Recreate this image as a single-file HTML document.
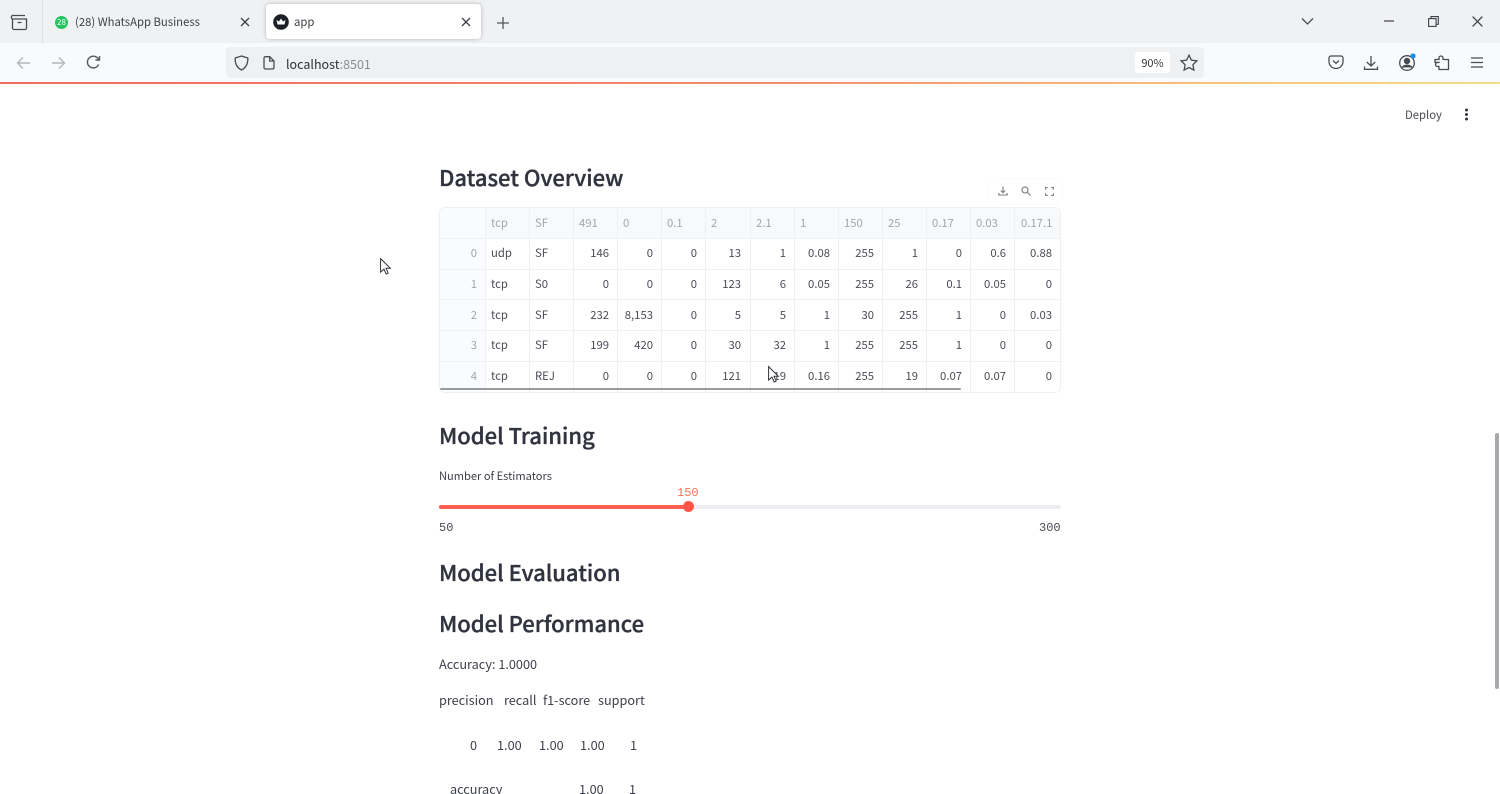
<!DOCTYPE html>
<html><head><meta charset="utf-8"><title>app</title>
<style>
html,body{margin:0;padding:0;width:1500px;height:794px;overflow:hidden;background:#fff}
#p{position:absolute;left:0;top:0;width:1500px;height:794px;overflow:hidden;background:#fff;filter:blur(.3px);font-family:"Noto Sans CJK JP","Liberation Sans",sans-serif;color:#31333f}
.a{position:absolute;white-space:nowrap}
svg{position:absolute;overflow:visible}
.h{font-size:22px;font-weight:500;-webkit-text-stroke:.35px #31333f;line-height:30px;color:#31333f;left:439px}
.t{font-size:12.700px;line-height:18px;color:#3d3f4a}
.g{position:absolute;width:44px;height:30px;line-height:30px;font-size:11.300px;color:#4a4c56;text-align:right;box-sizing:border-box;padding-right:8px}
.l{text-align:left;padding:0 0 0 6px}
.hd{color:#a3a6ad;text-align:left;padding:0 0 0 6px}
.i{color:#a3a6ad}
.v{position:absolute;top:208px;height:184px;width:1px;background:#eff0f3}
.r{position:absolute;left:440px;width:620px;height:1px;background:#eff0f3}
.m{font-family:"Liberation Mono",monospace;font-size:12px;line-height:14px}
</style></head><body><div id="p">

<!-- tab strip -->
<div class="a" style="left:0;top:0;width:1500px;height:43px;background:#f0f1f3"></div>
<div class="a" style="left:42px;top:0;width:1px;height:43px;background:#dfe0e3"></div>
<svg style="left:11px;top:14px" width="17" height="17" fill="none" stroke="#4a4b52" stroke-width="1.300"><path d="M3 1.500h11M1.500 5h14v9a1.500 1.500 0 0 1-1.500 1.500H3A1.500 1.500 0 0 1 1.500 14zM1.500 5a1.700 1.700 0 0 1 1.500-3.500M6.500 8.500h4"/></svg>
<div class="a" style="left:55px;top:16px;width:13px;height:13px;border-radius:50%;background:#25c45e;color:#fff;font-size:8px;line-height:13px;text-align:center">28</div>
<div class="a" style="left:75px;top:13px;font-size:11.300px;line-height:18px;color:#3f4048">(28) WhatsApp Business</div>
<svg style="left:240px;top:17px" width="10" height="10" stroke="#3f4048" stroke-width="1.300"><path d="M1 1l8 8M9 1l-8 8"/></svg>
<div class="a" style="left:266px;top:4px;width:215px;height:35px;background:#fff;border-radius:4px;box-shadow:0 0 4px rgba(0,0,0,.25)"></div>
<svg style="left:273px;top:14px" width="16" height="16"><circle cx="8" cy="8" r="7.800" fill="#1d1f26"/><path d="M3.500 6l2.500 1.500L8 4.500l2 3L12.500 6l-1 4.500h-7z" fill="#fff"/></svg>
<div class="a" style="left:294px;top:13px;font-size:11.300px;line-height:18px;color:#3f4048">app</div>
<svg style="left:461px;top:17px" width="10" height="10" stroke="#3f4048" stroke-width="1.300"><path d="M1 1l8 8M9 1l-8 8"/></svg>
<svg style="left:496px;top:16px" width="14" height="14" stroke="#55565c" stroke-width="1.300"><path d="M7 1v12M1 7h12"/></svg>
<svg style="left:1301px;top:17px" width="13" height="9" fill="none" stroke="#4a4b52" stroke-width="1.300"><path d="M1 1.500l5.500 5.500 5.500-5.500"/></svg>
<svg style="left:1384px;top:20px" width="11" height="2" stroke="#3f4048" stroke-width="1.200"><path d="M0 1h10"/></svg>
<svg style="left:1428px;top:16px" width="11" height="11" fill="none" stroke="#3f4048" stroke-width="1.100"><rect x=".600" y="2.600" width="7.500" height="7.800"/><path d="M3 2.500V.600h7.300v7.700H8.200"/></svg>
<svg style="left:1472px;top:16px" width="11" height="11" stroke="#3f4048" stroke-width="1.300"><path d="M.6.600l9.800 9.800M10.400.600L.6 10.400"/></svg>

<!-- nav bar -->
<div class="a" style="left:0;top:43px;width:1500px;height:39px;background:#f9fafb"></div>
<svg style="left:16px;top:56px" width="15" height="14" fill="none" stroke="#b4b5b9" stroke-width="1.400"><path d="M14 7H1.500M7 1.500L1.500 7 7 12.500"/></svg>
<svg style="left:51px;top:56px" width="15" height="14" fill="none" stroke="#b4b5b9" stroke-width="1.400"><path d="M1 7h12.500M8 1.500L13.500 7 8 12.500"/></svg>
<svg style="left:86px;top:55px" width="15" height="15" fill="none" stroke="#55565c" stroke-width="1.400"><path d="M12.700 9.500A5.900 5.900 0 1 1 11.800 3.200L13.500 5M13.500 1v4h-4"/></svg>
<div class="a" style="left:226px;top:47px;width:978px;height:31px;background:#eff0f1;border-radius:4px"></div>
<svg style="left:234px;top:55px" width="15" height="16" fill="none" stroke="#4a4b52" stroke-width="1.300"><path d="M7.500 1L13.800 3c.3 5.500-1.500 9.500-6.300 12C2.700 12.500.9 8.500 1.200 3z"/></svg>
<svg style="left:263px;top:56px" width="12" height="14" fill="none" stroke="#4a4b52" stroke-width="1.300"><path d="M1 2.200A1.500 1.500 0 0 1 2.500.7h4.200L11 5v6.500a1.500 1.500 0 0 1-1.500 1.500h-7A1.500 1.500 0 0 1 1 11.500zM6.700.7V5H11"/></svg>
<div class="a" style="left:286px;top:54px;font-size:12.500px;line-height:19px;color:#303138">localhost<span style="color:#8b8c92">:8501</span></div>
<div class="a" style="left:1135px;top:52px;width:35px;height:21px;background:#fff;border-radius:3px;font-size:11px;line-height:22px;text-align:center;color:#33343a">90%</div>
<svg style="left:1180px;top:54px" width="18" height="17" fill="none" stroke="#4a4b52" stroke-width="1.300"><path d="M9 1.200l2.400 5 5.500.7-4 3.800 1 5.400L9 13.500l-4.900 2.600 1-5.400-4-3.800 5.500-.7z"/></svg>
<svg style="left:1328px;top:55px" width="16" height="15" fill="none" stroke="#4a4b52" stroke-width="1.300"><path d="M1 3a2 2 0 0 1 2-2h10a2 2 0 0 1 2 2v3.500a7 7 0 0 1-14 0zM5 5.500l3 2.800 3-2.800"/></svg>
<svg style="left:1363px;top:55px" width="16" height="16" fill="none" stroke="#4a4b52" stroke-width="1.300"><path d="M8 1v10M3.800 7L8 11l4.200-4M1.500 11.500v2.800h13v-2.800"/></svg>
<svg style="left:1398px;top:53px" width="20" height="18" fill="none" stroke="#4a4b52" stroke-width="1.300"><circle cx="9" cy="10" r="7.300"/><circle cx="9" cy="8" r="2.600" fill="#4a4b52"/><path d="M4 14.500c2-3 8-3 10 0" fill="#4a4b52"/><circle cx="15" cy="3" r="2.600" fill="#1a8cf0" stroke="none"/></svg>
<svg style="left:1434px;top:54px" width="16" height="17" fill="none" stroke="#4a4b52" stroke-width="1.300"><path d="M1 5.500h4V4a2 2 0 0 1 4 0v1.500h5.500V15.500H5V12.500H3.500a2 2 0 0 1 0-4H5v-.1H1z"/></svg>
<svg style="left:1471px;top:57px" width="12" height="11" stroke="#4a4b52" stroke-width="1.200"><path d="M0 1h12M0 5.500h12M0 10h12"/></svg>
<div class="a" style="left:0;top:82px;width:1500px;height:2px;background:linear-gradient(90deg,#ef6a5f 0%,#f28a6a 50%,#f6c97d 85%,#f8dc8b 100%)"></div>

<!-- app header -->
<div class="a" style="left:1405px;top:106px;font-size:11.300px;line-height:18px;color:#4a4c56">Deploy</div>
<svg style="left:1464px;top:108px" width="5" height="13" fill="#31333f"><circle cx="2.500" cy="2" r="1.500"/><circle cx="2.500" cy="6.500" r="1.500"/><circle cx="2.500" cy="11" r="1.500"/></svg>

<div class="a h" style="top:162px">Dataset Overview</div>

<!-- toolbar -->
<div class="a" style="left:990px;top:180px;width:71px;height:22px;background:#fff;border-radius:5px;box-shadow:0 0 4px rgba(0,0,0,.04)"></div>
<svg style="left:998px;top:186px" width="10" height="10" fill="none" stroke="#7e8087" stroke-width="1.100"><path d="M5 .5v6M2.800 4.500L5 6.700l2.200-2.200M.8 7v2h8.400V7"/></svg>
<svg style="left:1021px;top:186px" width="10" height="10" fill="none" stroke="#7e8087" stroke-width="1.200"><circle cx="4" cy="4" r="3"/><path d="M6.200 6.200L9.500 9.500"/></svg>
<svg style="left:1045px;top:187px" width="9" height="9" fill="none" stroke="#7e8087" stroke-width="1.100"><path d="M.6 2.800V.6h2.200M6.200.6h2.200v2.200M8.400 6.200v2.200H6.200M2.800 8.400H.6V6.200"/></svg>

<!-- table -->
<div class="a" style="left:439px;top:207px;width:620px;height:184px;border:1px solid #eff0f3;border-radius:6px"></div>
<div class="a" style="left:440px;top:208px;width:620px;height:30px;background:#f8f9fb;border-radius:6px 6px 0 0"></div>
<div class="a" style="left:440px;top:208px;width:45px;height:183px;background:#fafbfc;border-radius:6px 0 0 6px"></div>
<div class="v" style="left:484.500px"></div><div class="v" style="left:528.500px"></div><div class="v" style="left:572.500px"></div><div class="v" style="left:616.500px"></div><div class="v" style="left:660.500px"></div><div class="v" style="left:705px"></div><div class="v" style="left:749.500px"></div><div class="v" style="left:793.500px"></div><div class="v" style="left:837.500px"></div><div class="v" style="left:882px"></div><div class="v" style="left:926px"></div><div class="v" style="left:970px"></div><div class="v" style="left:1014px"></div>
<div class="r" style="top:238px"></div><div class="r" style="top:269px"></div><div class="r" style="top:299px"></div><div class="r" style="top:330px"></div><div class="r" style="top:361px"></div>

<!-- header row -->
<div class="g hd" style="left:485px;top:207.500px">tcp</div><div class="g hd" style="left:529px;top:207.500px">SF</div><div class="g hd" style="left:573px;top:207.500px">491</div><div class="g hd" style="left:617px;top:207.500px">0</div><div class="g hd" style="left:661px;top:207.500px">0.1</div><div class="g hd" style="left:705px;top:207.500px">2</div><div class="g hd" style="left:750px;top:207.500px">2.1</div><div class="g hd" style="left:794px;top:207.500px">1</div><div class="g hd" style="left:838px;top:207.500px">150</div><div class="g hd" style="left:882px;top:207.500px">25</div><div class="g hd" style="left:926px;top:207.500px">0.17</div><div class="g hd" style="left:970px;top:207.500px">0.03</div><div class="g hd" style="left:1015px;top:207.500px">0.17.1</div>

<!-- row 0 -->
<div class="g i" style="left:441px;top:238px">0</div><div class="g l" style="left:485px;top:238px">udp</div><div class="g l" style="left:529px;top:238px">SF</div><div class="g" style="left:573px;top:238px">146</div><div class="g" style="left:617px;top:238px">0</div><div class="g" style="left:661px;top:238px">0</div><div class="g" style="left:705px;top:238px">13</div><div class="g" style="left:750px;top:238px">1</div><div class="g" style="left:794px;top:238px">0.08</div><div class="g" style="left:838px;top:238px">255</div><div class="g" style="left:882px;top:238px">1</div><div class="g" style="left:926px;top:238px">0</div><div class="g" style="left:970px;top:238px">0.6</div><div class="g" style="left:1016px;top:238px">0.88</div>
<!-- row 1 -->
<div class="g i" style="left:441px;top:269px">1</div><div class="g l" style="left:485px;top:269px">tcp</div><div class="g l" style="left:529px;top:269px">S0</div><div class="g" style="left:573px;top:269px">0</div><div class="g" style="left:617px;top:269px">0</div><div class="g" style="left:661px;top:269px">0</div><div class="g" style="left:705px;top:269px">123</div><div class="g" style="left:750px;top:269px">6</div><div class="g" style="left:794px;top:269px">0.05</div><div class="g" style="left:838px;top:269px">255</div><div class="g" style="left:882px;top:269px">26</div><div class="g" style="left:926px;top:269px">0.1</div><div class="g" style="left:970px;top:269px">0.05</div><div class="g" style="left:1016px;top:269px">0</div>
<!-- row 2 -->
<div class="g i" style="left:441px;top:299.500px">2</div><div class="g l" style="left:485px;top:299.500px">tcp</div><div class="g l" style="left:529px;top:299.500px">SF</div><div class="g" style="left:573px;top:299.500px">232</div><div class="g" style="left:617px;top:299.500px">8,153</div><div class="g" style="left:661px;top:299.500px">0</div><div class="g" style="left:705px;top:299.500px">5</div><div class="g" style="left:750px;top:299.500px">5</div><div class="g" style="left:794px;top:299.500px">1</div><div class="g" style="left:838px;top:299.500px">30</div><div class="g" style="left:882px;top:299.500px">255</div><div class="g" style="left:926px;top:299.500px">1</div><div class="g" style="left:970px;top:299.500px">0</div><div class="g" style="left:1016px;top:299.500px">0.03</div>
<!-- row 3 -->
<div class="g i" style="left:441px;top:330px">3</div><div class="g l" style="left:485px;top:330px">tcp</div><div class="g l" style="left:529px;top:330px">SF</div><div class="g" style="left:573px;top:330px">199</div><div class="g" style="left:617px;top:330px">420</div><div class="g" style="left:661px;top:330px">0</div><div class="g" style="left:705px;top:330px">30</div><div class="g" style="left:750px;top:330px">32</div><div class="g" style="left:794px;top:330px">1</div><div class="g" style="left:838px;top:330px">255</div><div class="g" style="left:882px;top:330px">255</div><div class="g" style="left:926px;top:330px">1</div><div class="g" style="left:970px;top:330px">0</div><div class="g" style="left:1016px;top:330px">0</div>
<!-- row 4 -->
<div class="g i" style="left:441px;top:361px">4</div><div class="g l" style="left:485px;top:361px">tcp</div><div class="g l" style="left:529px;top:361px">REJ</div><div class="g" style="left:573px;top:361px">0</div><div class="g" style="left:617px;top:361px">0</div><div class="g" style="left:661px;top:361px">0</div><div class="g" style="left:705px;top:361px">121</div><div class="g" style="left:750px;top:361px">19</div><div class="g" style="left:794px;top:361px">0.16</div><div class="g" style="left:838px;top:361px">255</div><div class="g" style="left:882px;top:361px">19</div><div class="g" style="left:926px;top:361px">0.07</div><div class="g" style="left:970px;top:361px">0.07</div><div class="g" style="left:1016px;top:361px">0</div>
<div class="a" style="left:440px;top:388px;width:521px;height:2px;background:#9a9b9f;border-radius:1px"></div>

<!-- cursors -->
<svg style="left:380px;top:258px" width="11" height="18" fill="#fff" stroke="#33343a" stroke-width="1"><path d="M.6.600v13.500l3.300-3 2.300 5 2-1-2.200-4.800h4.300z"/></svg>
<svg style="left:768px;top:366px" width="11" height="18" fill="#fff" stroke="#33343a" stroke-width="1"><path d="M.6.600v13.500l3.300-3 2.300 5 2-1-2.200-4.800h4.300z"/></svg>

<div class="a h" style="top:420px">Model Training</div>
<div class="a t" style="left:439px;top:467px;font-size:11.100px">Number of Estimators</div>

<!-- slider -->
<div class="a m" style="left:677px;top:486px;color:#ff6f61">150</div>
<div class="a" style="left:439px;top:505px;width:622px;height:4px;border-radius:2px;background:#eceef2"></div>
<div class="a" style="left:439px;top:505px;width:250px;height:4px;border-radius:2px;background:#ff5f50"></div>
<div class="a" style="left:683px;top:501px;width:11px;height:11px;border-radius:50%;background:#ff5448"></div>
<div class="a m" style="left:439px;top:521px;color:#4a4c56">50</div>
<div class="a m" style="left:1039px;top:521px;color:#4a4c56">300</div>

<div class="a h" style="top:557px">Model Evaluation</div>
<div class="a h" style="top:608px">Model Performance</div>

<div class="a t" style="left:439px;top:655px">Accuracy: 1.0000</div>
<div class="a t" style="left:439px;top:691px">precision</div>
<div class="a t" style="left:504px;top:691px">recall</div>
<div class="a t" style="left:543px;top:691px">f1-score</div>
<div class="a t" style="left:598px;top:691px">support</div>
<div class="a t" style="left:470px;top:736px">0</div>
<div class="a t" style="left:497px;top:736px">1.00</div>
<div class="a t" style="left:539px;top:736px">1.00</div>
<div class="a t" style="left:580px;top:736px">1.00</div>
<div class="a t" style="left:630px;top:736px">1</div>
<div class="a t" style="left:450px;top:780px">accuracy</div>
<div class="a t" style="left:579px;top:780px">1.00</div>
<div class="a t" style="left:629px;top:780px">1</div>

<!-- scrollbar -->
<div class="a" style="left:1495px;top:433px;width:4px;height:256px;background:#a8a9ad;border-radius:2px"></div>
</div></body></html>
